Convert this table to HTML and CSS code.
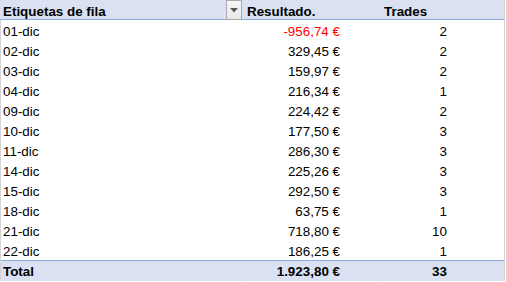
FILE: index.html
```html
<!DOCTYPE html>
<html lang="es">
<head>
<meta charset="utf-8">
<title>Tabla dinámica</title>
<link rel="stylesheet" href="styles.css">
</head>
<body>
<div class="sheet">
  <div class="pivot">
    <div class="row head">
      <div class="cell label">Etiquetas de fila
        <span class="dd"><svg width="8" height="5" viewBox="0 0 8 5"><path d="M0 0H8L4 4.5Z" fill="#595959"/></svg></span>
      </div>
      <div class="cell hb">Resultado.</div>
      <div class="cell hc">Trades</div>
    </div>
    <div class="row"><div class="cell label">01-dic</div><div class="cell num neg">-956,74 €</div><div class="cell cnt">2</div></div>
    <div class="row"><div class="cell label">02-dic</div><div class="cell num">329,45 €</div><div class="cell cnt">2</div></div>
    <div class="row"><div class="cell label">03-dic</div><div class="cell num">159,97 €</div><div class="cell cnt">2</div></div>
    <div class="row"><div class="cell label">04-dic</div><div class="cell num">216,34 €</div><div class="cell cnt">1</div></div>
    <div class="row"><div class="cell label">09-dic</div><div class="cell num">224,42 €</div><div class="cell cnt">2</div></div>
    <div class="row"><div class="cell label">10-dic</div><div class="cell num">177,50 €</div><div class="cell cnt">3</div></div>
    <div class="row"><div class="cell label">11-dic</div><div class="cell num">286,30 €</div><div class="cell cnt">3</div></div>
    <div class="row"><div class="cell label">14-dic</div><div class="cell num">225,26 €</div><div class="cell cnt">3</div></div>
    <div class="row"><div class="cell label">15-dic</div><div class="cell num">292,50 €</div><div class="cell cnt">3</div></div>
    <div class="row"><div class="cell label">18-dic</div><div class="cell num">63,75 €</div><div class="cell cnt">1</div></div>
    <div class="row"><div class="cell label">21-dic</div><div class="cell num">718,80 €</div><div class="cell cnt">10</div></div>
    <div class="row"><div class="cell label">22-dic</div><div class="cell num">186,25 €</div><div class="cell cnt">1</div></div>
    <div class="row total"><div class="cell label">Total</div><div class="cell num">1.923,80 €</div><div class="cell cnt">33</div></div>
  </div>
  <div class="below">
    <span class="tick t1"></span><span class="tick t2"></span>
  </div>
</div>
</body>
</html>
```

FILE: styles.css
```css
html, body {
  margin: 0;
  padding: 0;
  background: #ffffff;
}
body {
  font-family: "Liberation Sans", Arial, sans-serif;
  font-size: 13.4px;
  color: #000000;
  width: 506px;
  height: 282px;
  overflow: hidden;
}
.sheet {
  width: 506px;
}
.pivot {
  width: 505px;
  border-right: 1px solid #d4d4d4;
  border-left: 1px solid #d4d4d4;
  box-sizing: border-box;
}
.row {
  display: grid;
  grid-template-columns: 241px 139px 1fr;
  height: 20px;
  line-height: 23px;
}
.row.head {
  background: #d9e1f2;
  border-bottom: 1px solid #8ea9db;
  font-weight: bold;
  margin-left: -1px;
  padding-left: 1px;
  height: 19px;
  line-height: 23px;
}
.row.total {
  background: #d9e1f2;
  border-top: 1px solid #8ea9db;
  font-weight: bold;
  height: 20px;
  line-height: 22px;
}
.cell {
  white-space: nowrap;
  overflow: visible;
}
.label {
  position: relative;
  padding-left: 2px;
}
.hb {
  padding-left: 5px;
}
.hc {
  padding-left: 3px;
}
.num {
  text-align: right;
  padding-right: 41px;
}
.cnt {
  text-align: right;
  padding-right: 57px;
}
.neg {
  color: #ff0000;
}
.dd {
  position: absolute;
  top: 0;
  right: 0;
  width: 14px;
  height: 18px;
  border: 1px solid #ababab;
  background: linear-gradient(#f7f7f7, #e8e8e8);
  display: flex;
  align-items: center;
  justify-content: center;
}
.dd svg {
  display: block;
}
.below {
  position: relative;
  height: 1px;
}
.tick {
  position: absolute;
  top: 0;
  width: 1px;
  height: 1px;
  background: #d4d4d4;
}
.t1 { left: 242px; }
.t2 { left: 381px; }
```
